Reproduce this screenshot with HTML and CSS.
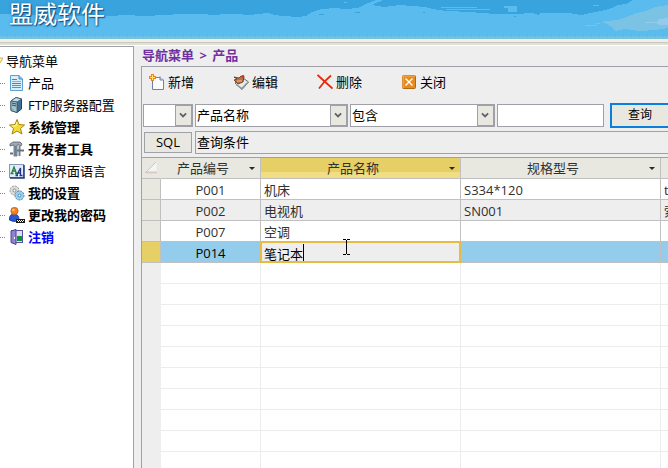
FILE: index.html
```html
<!DOCTYPE html>
<html lang="zh-CN">
<head>
<meta charset="utf-8">
<title>盟威软件</title>
<link rel="stylesheet" href="styles.css">
</head>
<body>
<header class="banner">
  <svg class="sky" viewBox="0 0 668 39" preserveAspectRatio="none" aria-hidden="true" shape-rendering="crispEdges">
    <rect width="668" height="39" fill="#5abbef"/>
    <path fill="#39a3de" d="M0 0H633L626 4L618 5L612 8L605 10L590 13L582 15L573 14L570 13H540L538 15L532 13L515 14H495L482 13L470 12L448 11L438 10L425 7L400 5L384 7L372 5L383 0H376L366 4L358 8L345 9L335 8L322 9L312 12L306 16L297 17L284 16L274 15L268 13L258 14L250 15L235 14H225L215 15L200 14L180 14L165 15L145 16L125 15L110 16L30 15L0 14Z"/>
    <path fill="#5abbef" d="M441 7H477V8H441ZM446 9H490V10H446ZM504 6H517V12H508V8H504ZM395 9H403V10H395ZM593 5H599V6H593ZM344 2H347V3H344Z"/>
    <path fill="#39a3de" d="M319 14H324V15H319ZM355 12H360V13H355ZM423 12H425V13H423ZM514 16H516V17H514Z"/>
    <path fill="#7bc3e5" d="M668 5L655 7L646 11L636 13L627 17L617 20L607 21L601 22L607 24L612 27L615 31L625 29L640 31L655 30L668 28ZM585 25H597V26H585ZM596 23H600V24H596Z"/>
    <path fill="#94cbec" d="M668 18L660 19L656 22H645V23H656L660 25H668Z"/>
    <rect y="37" width="668" height="2" fill="#7bc0d6"/>
    <path stroke="#7bc0d6" stroke-dasharray="2 1 3 2" d="M0 36.5H668"/>
  </svg>
  <h1 class="brand">盟威软件</h1>
</header>

<div class="workspace">
  <nav class="sidebar" aria-label="导航菜单">
    <div class="tree-root"><svg class="twisty" viewBox="0 0 4 8" aria-hidden="true"><path d="M0 1H3L0 6" fill="#fff3b0" stroke="#c8b860"/></svg>导航菜单</div>
    <ul class="tree">
      <li><a href="#"><svg class="icon" viewBox="0 0 16 16" aria-hidden="true"><path d="M1.500 .5H10L13.500 4V15.500H1.500Z" fill="#d9effc" stroke="#5aa0d0"/><path d="M10 .5V4H13.500" fill="#8cc4ec" stroke="#4a88b8"/><path d="M3 4.500H8M3 8.500H12" stroke="#e05030"/><path d="M3 6.500H12" stroke="#e8a040"/><path d="M3 10.500H12M3 12.500H12" stroke="#50a868"/></svg>产品</a></li>
      <li><a href="#"><svg class="icon" viewBox="0 0 16 16" aria-hidden="true"><path d="M2 4L7 .5L12.500 2V12L8 15.500L2 13.500Z" fill="#44708c" stroke="#204058"/><path d="M2 4L7 .5L12.500 2L8 5Z" fill="#c8dce8" stroke="#305870" stroke-width=".7"/><path d="M2 4L8 5V15.500L2 13.500Z" fill="#a8c4d4" stroke="#284c64" stroke-width=".7"/><path d="M3 6L7 7M3 8L7 9" stroke="#284c64"/><path d="M3 12L5 12.500" stroke="#50c850"/></svg>FTP服务器配置</a></li>
      <li class="strong"><a href="#"><svg class="icon" viewBox="0 0 16 16" aria-hidden="true"><path d="M8 .5L10 5.500L15.500 6L11.500 9.500L13 15L8 12L3 15L4.500 9.500L.5 6L6 5.500Z" fill="#f4dc38" stroke="#a88410"/><path d="M8 3L7 7L3 7" fill="none" stroke="#fff8a0"/></svg>系统管理</a></li>
      <li class="strong"><a href="#"><svg class="icon" viewBox="0 0 16 16" aria-hidden="true"><path d="M1 3L4 1H11L13 3L12 5L10 4H8V15H5V4L1 5Z" fill="#a0a8b0" stroke="#59626c" stroke-width=".8"/><path d="M6.500 5V14" stroke="#4c86b4" stroke-width="1.500"/><path d="M10.500 5V15" stroke="#78828c" stroke-width="2"/><path d="M8 9.500H15M1 12.500H4" fill="none" stroke="#68737c" stroke-width="2"/></svg>开发者工具</a></li>
      <li><a href="#"><svg class="icon" viewBox="0 0 16 16" aria-hidden="true"><rect x=".5" y="1.500" width="14" height="13" fill="#e4ecf8" stroke="#8098c0"/><path d="M1 15H15V2" fill="none" stroke="#203878" stroke-width="1.500"/><path d="M1.500 10.500H4.500M6 10.500H9M2.500 10.500L5 4L7.500 10.500M4 8H7" fill="none" stroke="#208040" stroke-width="1.300"/><path d="M6.500 12.500H9M10.500 12.500H13.500M7.500 12.500L11.500 5V12.500M9 10H12" fill="none" stroke="#203890" stroke-width="1.300"/></svg>切换界面语言</a></li>
      <li class="strong"><a href="#"><svg class="icon" viewBox="0 0 16 16" aria-hidden="true"><circle cx="5.500" cy="5.500" r="4.500" fill="#dcdcdc" stroke="#999" stroke-dasharray="2 1"/><circle cx="5.500" cy="5.500" r="1.500" fill="#fff" stroke="#888"/><circle cx="10.500" cy="10.500" r="4.500" fill="#9cd0ee" stroke="#4888b0" stroke-dasharray="2 1"/><circle cx="10.500" cy="10.500" r="1.400" fill="#fff" stroke="#4a84a8"/></svg>我的设置</a></li>
      <li class="strong"><a href="#"><svg class="icon" viewBox="0 0 16 16" aria-hidden="true"><path d="M.5 13Q0 7 5 7Q10 7 10 13Q5 16 .5 13Z" fill="#2858d8" stroke="#1840a0"/><circle cx="5.500" cy="4" r="3.700" fill="#f08020" stroke="#b85008" stroke-width=".6"/><circle cx="4.500" cy="3" r="1.300" fill="#ffc078"/><rect x="7" y="12" width="9" height="4" fill="#181818"/><path d="M8 13.500H15" stroke="#fff" stroke-dasharray="1 1"/><path d="M9 14.500H15" stroke="#fff" stroke-dasharray="1 1"/></svg>更改我的密码</a></li>
      <li class="strong logout"><a href="#"><svg class="icon" viewBox="0 0 16 16" aria-hidden="true"><rect x="2.500" y="1.500" width="11" height="12" fill="#dcdcf4" stroke="#5850a0"/><rect x="8" y="7" width="5" height="5" fill="#109038"/><path d="M2 2L7 .5V15.500L2 13.500Z" fill="#8c84d0" stroke="#4c4494"/><path d="M5.500 8V10" stroke="#fff"/></svg>注销</a></li>
    </ul>
  </nav>

  <main class="main">
    <p class="crumbs">导航菜单 <span>&gt;</span> 产品</p>
    <section class="panel">
      <div class="toolbar">
        <button type="button"><svg class="icon" viewBox="0 0 16 16" aria-hidden="true"><path d="M3.500 3.500H11L14.500 6V15.500H3.500Z" fill="#fcfdff" stroke="#7480a8"/><path d="M11 2.500V6H14.500" fill="#c8d4ec" stroke="#7480a8"/><path d="M3.500 0V7M0 3.500H7" stroke="#e88818" stroke-width="3"/><path d="M3.500 1V6M1 3.500H6" stroke="#ffe070"/></svg>新增</button>
        <button type="button"><svg class="icon" viewBox="0 0 16 16" aria-hidden="true"><path d="M2 9L10 4L15.500 8L9 15.500Z" fill="#e8ecec" stroke="#606868"/><path d="M3 10.500L9 14.500L14 9" fill="none" stroke="#909898" stroke-width="1.500"/><path d="M1 3L4 5L1 6L5 10L10 8L11 3L8 2L6 4Z" fill="#b87048" stroke="#583018" stroke-width=".8"/><path d="M4 7H9" stroke="#f0c098"/><circle cx="10" cy="2.500" r="1.400" fill="#e03020"/></svg>编辑</button>
        <button type="button"><svg class="icon" viewBox="0 0 16 16" aria-hidden="true"><path d="M.5 1L6 6L15.500 14.500" fill="none" stroke="#e82808" stroke-width="1.800"/><path d="M14 1.500L8 7L2 14.500" fill="none" stroke="#e82808" stroke-width="1.800"/></svg>删除</button>
        <button type="button"><svg class="icon" viewBox="0 0 16 16" aria-hidden="true"><rect x="1.500" y="1.500" width="13" height="13" rx="1" fill="#e88a1c" stroke="#b06818"/><path d="M2 14V2H14" fill="none" stroke="#f8b860"/><path d="M4.500 4.500L11.500 11.500M11.500 4.500L4.500 11.500" stroke="#fff" stroke-width="1.400"/></svg>关闭</button>
      </div>

      <div class="filters">
        <span class="combo combo-logic"><select aria-label="逻辑"><option></option></select><svg class="chevron" viewBox="0 0 17 21" aria-hidden="true"><path d="M4.500 8L8 11.500L11.500 8"/></svg></span>
        <span class="combo combo-field"><select aria-label="字段"><option>产品名称</option></select><svg class="chevron" viewBox="0 0 17 21" aria-hidden="true"><path d="M4.500 8L8 11.500L11.500 8"/></svg></span>
        <span class="combo combo-match"><select aria-label="匹配"><option>包含</option></select><svg class="chevron" viewBox="0 0 17 21" aria-hidden="true"><path d="M4.500 8L8 11.500L11.500 8"/></svg></span>
        <input class="keyword" type="text" aria-label="关键字">
        <button class="search" type="button">查询</button>
      </div>

      <div class="condition">
        <button class="sql" type="button">SQL</button>
        <input class="condition-text" type="text" aria-label="查询条件" value="查询条件" readonly>
      </div>

      <div class="grid">
        <table>
          <colgroup><col class="c-sel"><col class="c-code"><col class="c-wide"><col class="c-wide"><col class="c-wide"></colgroup>
          <thead>
            <tr>
              <th class="corner"><svg viewBox="0 0 12 12" aria-hidden="true"><path d="M11.500 0V11.500H0Z" fill="#f4f4f4"/><path d="M0 11L11 0" stroke="#b4c8e0"/><path d="M1 10.500H12" stroke="#d8c8c8" stroke-width="2"/></svg></th>
              <th><span>产品编号</span></th>
              <th class="active"><span>产品名称</span></th>
              <th><span>规格型号</span></th>
              <th></th>
            </tr>
          </thead>
          <tbody>
            <tr><td></td><td>P001</td><td>机床</td><td>S334*120</td><td>t</td></tr>
            <tr class="alt"><td></td><td>P002</td><td>电视机</td><td>SN001</td><td>索</td></tr>
            <tr><td></td><td>P007</td><td>空调</td><td></td><td></td></tr>
            <tr class="selected"><td></td><td>P014</td><td class="editing"><input type="text" aria-label="产品名称" value="笔记本"><span class="caret"></span><svg class="pointer" viewBox="0 0 7 16" aria-hidden="true"><path d="M0 .5H3M4 .5H7M3.500 1V15M0 15.500H3M4 15.500H7" stroke="#000"/></svg></td><td></td><td></td></tr>
          </tbody>
          <tbody class="blank">
            <tr><td></td><td></td><td></td><td></td><td></td></tr>
            <tr><td></td><td></td><td></td><td></td><td></td></tr>
            <tr><td></td><td></td><td></td><td></td><td></td></tr>
            <tr><td></td><td></td><td></td><td></td><td></td></tr>
            <tr><td></td><td></td><td></td><td></td><td></td></tr>
            <tr><td></td><td></td><td></td><td></td><td></td></tr>
            <tr><td></td><td></td><td></td><td></td><td></td></tr>
            <tr><td></td><td></td><td></td><td></td><td></td></tr>
            <tr><td></td><td></td><td></td><td></td><td></td></tr>
            <tr><td></td><td></td><td></td><td></td><td></td></tr>
          </tbody>
        </table>
      </div>
    </section>
  </main>
</div>
</body>
</html>
```
FILE: styles.css
```css
* { box-sizing: border-box; }

body {
  margin: 0;
  height: 100vh;
  overflow: hidden;
  display: flex;
  flex-direction: column;
  background: #eee;
  color: #000;
  font: 13px/20px "Open Sans", "Noto Sans CJK SC", sans-serif;
}

button, input, select { font: inherit; color: inherit; border-radius: 0; }

.banner {
  flex: none;
  display: grid;
  border-bottom: 1px solid #fff;
  background: linear-gradient(#efefe8 0 42px, #c8c8bc 42px 43px, #e0e0d6 43px);
  height: 46px;
}
.sky { grid-area: 1 / 1; width: 100%; height: 39px; }
.brand {
  grid-area: 1 / 1;
  margin: 0 9px;
  height: 28px;
  font-size: 24px;
  line-height: 28px;
  font-weight: 400;
  color: #fff;
  text-shadow: 1px 1px 1px #0a4a80, 0 0 3px #1c78b4;
}

.workspace { flex: 1; min-height: 0; display: flex; gap: 7px; }

.sidebar {
  flex: none;
  width: 134px;
  padding-top: 3px;
  background: #fff;
  border: solid #a0a0a8;
  border-width: 1px 1px 0 0;
  line-height: 22px;
  white-space: nowrap;
}
.tree-root { display: flex; align-items: center; gap: 2px; }
.twisty { width: 4px; height: 8px; }
.tree { list-style: none; margin: 0; padding: 0; }
.tree li { display: flex; align-items: center; gap: 4px; }
.tree li::before { content: ""; width: 5px; border-top: 1px dotted #809080; }
.tree a { display: flex; align-items: center; gap: 3px; color: #000; text-decoration: none; }
.strong { font-weight: 700; }
.tree .logout a { color: #00f; }
.icon { flex: none; width: 16px; height: 16px; }

.main { flex: 1; min-width: 0; display: flex; flex-direction: column; overflow: hidden; }
.crumbs { margin: 0; padding: 0 1px 2px; line-height: 18px; color: #7030a0; font-weight: 700; }
.crumbs span { margin: 0 2px; }
.panel { flex: 1; border: solid #a0a0a8; border-width: 1px 0 0 1px; }

.toolbar { display: flex; height: 30px; padding-left: 7px; margin-bottom: 6px; }
.toolbar button {
  display: flex;
  align-items: center;
  gap: 3px;
  width: 84px;
  padding: 0;
  border: 0;
  background: none;
}

.filters { display: flex; align-items: center; gap: 2px; padding-left: 1px; margin-bottom: 3px; }
.combo { flex: none; display: grid; height: 23px; background: #fff; border: 1px solid #a0a0a8; }
.combo-logic { width: 50px; }
.combo-field { width: 153px; }
.combo-match { width: 145px; }
.combo select {
  grid-area: 1 / 1;
  appearance: none;
  width: 100%;
  min-width: 0;
  padding: 0 18px 2px 1px;
  border: 0;
  background: none;
}
.chevron {
  grid-area: 1 / 1;
  justify-self: end;
  width: 17px;
  height: 21px;
  background: #e8e8e0;
  border: 1px solid #a0a0a8;
  pointer-events: none;
}
.chevron path { fill: none; stroke: #606068; stroke-width: 2; }
.keyword { flex: none; width: 107px; height: 23px; padding: 0 2px; background: #fff; border: 1px solid #a0a0a8; }
.search {
  flex: none;
  width: 60px;
  height: 25px;
  margin-left: 4px;
  padding: 0 0 2px;
  font-size: 12px;
  background: #e8e8e0;
  border: 2px solid #0a80dc;
}

.condition { display: flex; align-items: center; gap: 3px; padding-left: 2px; margin-bottom: 3px; }
.sql { flex: none; width: 48px; height: 21px; padding: 0 0 2px; line-height: 16px; background: #e8e8e0; border: 1px solid #a0a0a8; }
.condition-text {
  flex: 1;
  min-width: 0;
  height: 23px;
  padding: 0 1px 2px;
  background: #eee;
  border: solid #a0a0a8;
  border-width: 1px 0 1px 1px;
}

.grid { border-top: 1px solid #a0a0a8; color: #303030; }
table { table-layout: fixed; width: 719px; border-collapse: separate; border-spacing: 0; }
.c-sel { width: 19px; }
.c-code { width: 100px; }
.c-wide { width: 200px; }
th, td {
  height: 21px;
  padding: 0 3px;
  border: solid #c0c0c0;
  border-width: 0 1px 1px 0;
  font-weight: 400;
  white-space: nowrap;
  vertical-align: middle;
}
th { background: #e8e8e0; position: relative; }
th span { display: block; padding-right: 15px; }
th span::after {
  content: "";
  position: absolute;
  right: 5px;
  top: 9px;
  border: solid transparent;
  border-width: 3px 3px 0;
  border-top-color: #202830;
}
th.active { background: linear-gradient(#e6cf64 0 14px, #f0dd84 14px); }
.corner { line-height: 0; border-right-color: #e8e8e0; }
.corner svg { width: 12px; height: 12px; }
td { background: #fff; line-height: 18px; padding-top: 2px; }
td:first-child { background: #e8e8e0; }
td:nth-child(2) { text-align: center; }
.alt td:not(:first-child) { background: #eee; }
.selected { color: #000; }
.selected td { background: #94ccec; }
.selected td:first-child { background: #e6cf64; }
.blank td { border-color: #ececec; }
.blank td:first-child { background: #eee; border-color: #eee; }

.selected .editing { position: relative; padding: 0; background: #eee; }
.editing input {
  display: block;
  width: 100%;
  height: 20px;
  padding: 2px 3px 0;
  border: 0;
  background: #eee;
  outline: 2px solid #e6bc44;
  outline-offset: -1px;
}
.caret { position: absolute; left: 42px; top: 2px; width: 1px; height: 17px; background: #000; }
.pointer { position: absolute; left: 82px; top: -3px; width: 7px; height: 16px; }
```
